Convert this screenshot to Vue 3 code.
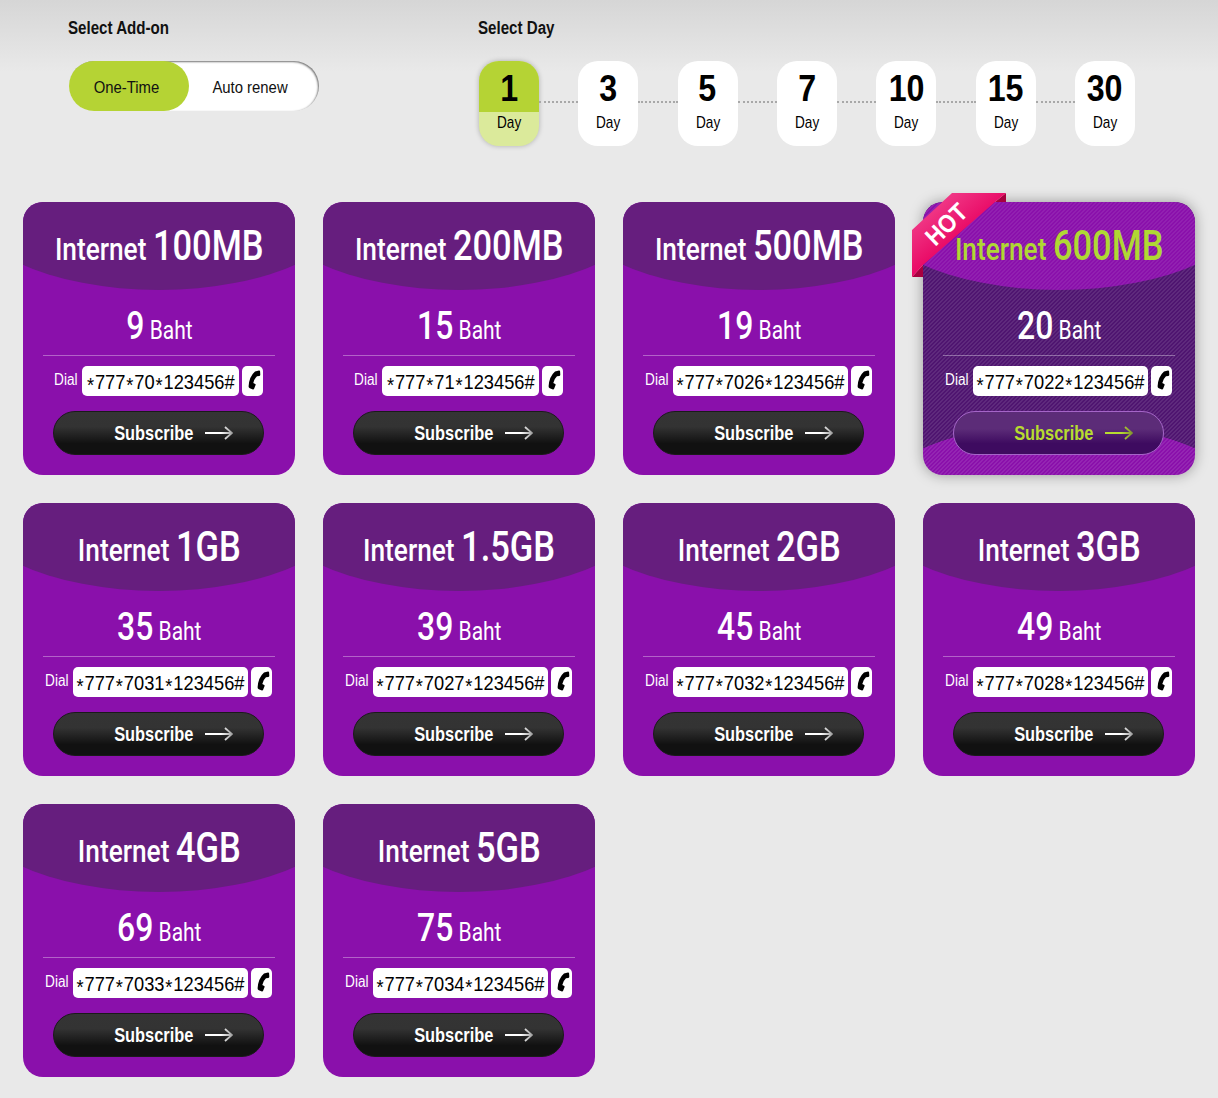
<script setup>
const days = [1, 3, 5, 7, 10, 15, 30]
const plans = [
  { a: '100MB', p: 9, c: '*777*70*123456#' },
  { a: '200MB', p: 15, c: '*777*71*123456#' },
  { a: '500MB', p: 19, c: '*777*7026*123456#' },
  { a: '600MB', p: 20, c: '*777*7022*123456#', hot: true },
  { a: '1GB', p: 35, c: '*777*7031*123456#' },
  { a: '1.5GB', p: 39, c: '*777*7027*123456#' },
  { a: '2GB', p: 45, c: '*777*7032*123456#' },
  { a: '3GB', p: 49, c: '*777*7028*123456#' },
  { a: '4GB', p: 69, c: '*777*7033*123456#' },
  { a: '5GB', p: 75, c: '*777*7034*123456#' }
]
const parts = (c) => c.split(/(\*)/).filter(Boolean)
const codeWidth = (c) => 9 * c.length + 22 + 'px'
</script>

<template>
  <main class="page">
    <section class="top">
      <div class="addon">
        <h2 class="label"><span>Select Add-on</span></h2>
        <div class="toggle">
          <span class="opt on"><span>One-Time</span></span>
          <span class="opt"><span>Auto renew</span></span>
        </div>
      </div>
      <div class="daysel">
        <h2 class="label"><span>Select Day</span></h2>
        <div class="days">
          <template v-for="(d, i) in days" :key="d">
            <i v-if="i" class="dots"></i>
            <div class="day" :class="{ active: i === 0 }">
              <b class="num"><span>{{ d }}</span></b>
              <span class="unit"><span>Day</span></span>
            </div>
          </template>
        </div>
      </div>
    </section>
    <section class="grid">
      <article v-for="(p, i) in plans" :key="p.a" class="card" :class="{ hot: p.hot }">
        <div v-if="p.hot" class="ribbon">
          <svg width="94" height="84" viewBox="0 0 94 84">
            <defs>
              <linearGradient id="rib" x1="0" y1="0" x2="0.55" y2="0.6">
                <stop offset="0" stop-color="#f4559a" />
                <stop offset="1" stop-color="#e8005f" />
              </linearGradient>
            </defs>
            <path d="M94 0V9H83Z" fill="#a8003f" />
            <path d="M0 84H11V72Z" fill="#a8003f" />
            <path d="M0 37L40 0H94L83 9L11 72L0 84Z" fill="url(#rib)" />
          </svg>
          <span class="hottext">HOT</span>
        </div>
        <header class="head">
          <h3 class="title"><span class="t1">Internet</span> <span class="t2">{{ p.a }}</span></h3>
        </header>
        <div class="price"><span class="big">{{ p.p }}</span> <span class="baht">Baht</span></div>
        <div class="rule"></div>
        <div class="dial">
          <span class="dl"><span>Dial</span></span>
          <span class="code" :style="{ width: codeWidth(p.c) }">
            <span class="codein"><template v-for="(s, k) in parts(p.c)" :key="k"><span v-if="s === '*'" class="star">*</span><template v-else>{{ s }}</template></template></span>
          </span>
          <span class="call">
            <svg width="17" height="22" viewBox="0 0 17 22">
              <path d="M11 1.500l4-.9q1-.1 1.100 1l.2 3.200q0 .9-.9 1.100l-2.400.4q-2.900 2.700-3.700 6.700l1.900 1q.7.400.4 1.100l-1.500 3.700q-.4.800-1.200.6l-3.100-1.200q-1.300-.6-1.200-2q.6-9.700 6.400-14.700z" fill="#000" />
            </svg>
          </span>
        </div>
        <button class="sub" type="button">
          <span class="subt">Subscribe</span>
          <svg class="arr" width="28" height="16" viewBox="0 0 28 16" fill="none">
            <defs>
              <linearGradient :id="'ar' + i" gradientUnits="userSpaceOnUse" x1="16" y1="0" x2="28" y2="0">
                <stop offset="0" :stop-color="p.hot ? '#b7dc30' : '#fff'" />
                <stop offset="1" :stop-color="p.hot ? '#7f8f30' : '#999'" />
              </linearGradient>
            </defs>
            <path d="M0 8H27M20 2L27 8L20 14" :stroke="'url(#ar' + i + ')'" stroke-width="1.800" />
          </svg>
        </button>
      </article>
    </section>
  </main>
</template>

<style>
body {
  background: #e9e9e9;
}
</style>

<style scoped>
.page {
  height: 1098px;
  overflow: hidden;
  box-sizing: border-box;
  padding: 0 23px;
  background: linear-gradient(#d6d6d6 0, #e9e9e9 72px);
  font-family: "Liberation Sans", sans-serif;
}
.top {
  display: flex;
  height: 202px;
  padding-left: 45px;
}
.addon {
  width: 410px;
}
.label {
  margin: 0;
  padding-top: 18px;
  height: 61px;
  box-sizing: border-box;
  font-size: 18px;
  line-height: 20px;
  font-weight: 700;
  color: #111;
}
.label span {
  display: inline-block;
  white-space: nowrap;
  transform: scaleX(.84);
  transform-origin: 0 50%;
}
.toggle {
  display: flex;
  width: 250px;
  height: 50px;
  margin-left: 1px;
  border-radius: 25px;
  background: #fff;
  box-shadow: inset -1px 1px 2px rgba(0, 0, 0, .55);
  font-size: 17px;
  color: #111;
}
.opt {
  flex: 1;
  display: flex;
  align-items: center;
  justify-content: center;
  padding: 3px 8px 0 0;
  box-sizing: border-box;
}
.opt span {
  transform: scaleX(.875);
  white-space: nowrap;
}
.opt.on {
  flex: 0 0 120px;
  padding: 3px 6px 0 0;
  border-radius: 25px;
  background: #b5d334;
}
.days {
  display: flex;
  align-items: flex-start;
  margin-left: 1px;
}
.dots {
  width: 39.330px;
  margin-top: 40px;
  border-top: 2px dotted #a8a8a8;
}
.day {
  flex: 0 0 60px;
  height: 85px;
  border-radius: 20px;
  overflow: hidden;
  background: #fff;
  display: flex;
  flex-direction: column;
  align-items: center;
  color: #000;
}
.day.active {
  background: #dbea9b;
  box-shadow: 0 0 5px rgba(0, 0, 0, .25);
}
.num {
  align-self: stretch;
  height: 51px;
  line-height: 56px;
  text-align: center;
  font-size: 37px;
}
.num span {
  display: inline-block;
  transform: scaleX(.87);
}
.day.active .num {
  background: #b5d334;
}
.unit {
  font-size: 17px;
  line-height: 21px;
}
.unit span {
  display: inline-block;
  transform: scaleX(.8);
}
.grid {
  display: grid;
  grid-template-columns: repeat(4, 272px);
  grid-auto-rows: 273px;
  gap: 28px;
}
.card {
  position: relative;
  border-radius: 20px;
  background: #8a10ab;
  color: #fff;
  display: flex;
  flex-direction: column;
  align-items: center;
}
.head {
  align-self: stretch;
  height: 88px;
  border-radius: 20px 20px 0 0;
  background: #661e7e;
  clip-path: ellipse(200px 94px at 50% -6px);
  display: flex;
  justify-content: center;
}
.title {
  margin: 0;
  white-space: nowrap;
  font-family: Roboto, sans-serif;
  font-weight: 500;
  transform: scaleX(.82);
  line-height: 88px;
  font-size: 32px;
}
.t2 {
  font-size: 42px;
  font-weight: 500;
}
.price {
  height: 65px;
  line-height: 73px;
  font-family: Roboto, sans-serif;
  font-size: 25px;
  transform: scaleX(.84);
  white-space: nowrap;
}
.big {
  font-size: 38px;
  font-weight: 500;
}
.rule {
  align-self: stretch;
  height: 1px;
  margin: 0 20px;
  background: rgba(255, 255, 255, .35);
}
.dial {
  display: flex;
  align-items: flex-start;
  margin: 10px 2px 0 0;
  height: 30px;
}
.dl {
  width: 24px;
  margin-right: 4px;
  font-size: 16px;
  line-height: 28px;
  display: flex;
  justify-content: center;
}
.dl span {
  transform: scaleX(.85);
}
.code {
  box-sizing: border-box;
  height: 30px;
  border-radius: 5px;
  background: #fff;
  color: #000;
  font-size: 21px;
  line-height: 32px;
  white-space: nowrap;
  display: flex;
  justify-content: center;
}
.codein {
  transform: scaleX(.87);
}
.star {
  display: inline-block;
  margin: 0 1px;
  transform: translateY(3px);
}
.call {
  width: 21px;
  height: 30px;
  margin-left: 3px;
  border-radius: 5px;
  background: #fff;
  display: flex;
  align-items: center;
  justify-content: center;
}
.sub {
  align-self: flex-start;
  width: 211px;
  height: 44px;
  margin: 15px 0 0 30px;
  box-sizing: border-box;
  padding: 0 0 0 30px;
  border: 1px solid #1a1a1a;
  border-radius: 22px;
  background: linear-gradient(#343434 0, #333 35%, #111 75%, #111 100%);
  color: #fff;
  font: 700 21px "Liberation Sans", sans-serif;
  display: flex;
  align-items: center;
  justify-content: center;
  gap: 12px;
}
.subt {
  margin: 0 -11.500px;
  transform: scaleX(.78);
  white-space: nowrap;
}
.hot {
  box-shadow: 0 0 14px rgba(0, 0, 0, .35);
  background:
    repeating-linear-gradient(135deg, rgba(255, 255, 255, .09) 0 1.410px, transparent 1.410px 2.830px),
    radial-gradient(ellipse 200px 94px at 50% 315px, #8a10ab 99.500%, transparent 100%),
    #4f1570;
}
.hot .head {
  background:
    repeating-linear-gradient(135deg, rgba(255, 255, 255, .07) 0 1.410px, transparent 1.410px 2.830px),
    #8a10ab;
}
.hot .title {
  color: #b0d834;
}
.hot .sub {
  border-color: #a565c8;
  background: linear-gradient(#5c2c78 0, #5c2c78 40%, #3e0b60 75%, #3e0b60 100%);
  color: #b7dc30;
}
.ribbon {
  position: absolute;
  z-index: 1;
  left: -11px;
  top: -9px;
  width: 94px;
  height: 84px;
}
.ribbon svg {
  display: block;
}
.hottext {
  position: absolute;
  left: 2px;
  top: 19px;
  width: 64px;
  text-align: center;
  font: 700 25px/24px "Liberation Sans", sans-serif;
  color: #fff;
  transform: rotate(-44deg) scaleX(.9);
}
</style>
